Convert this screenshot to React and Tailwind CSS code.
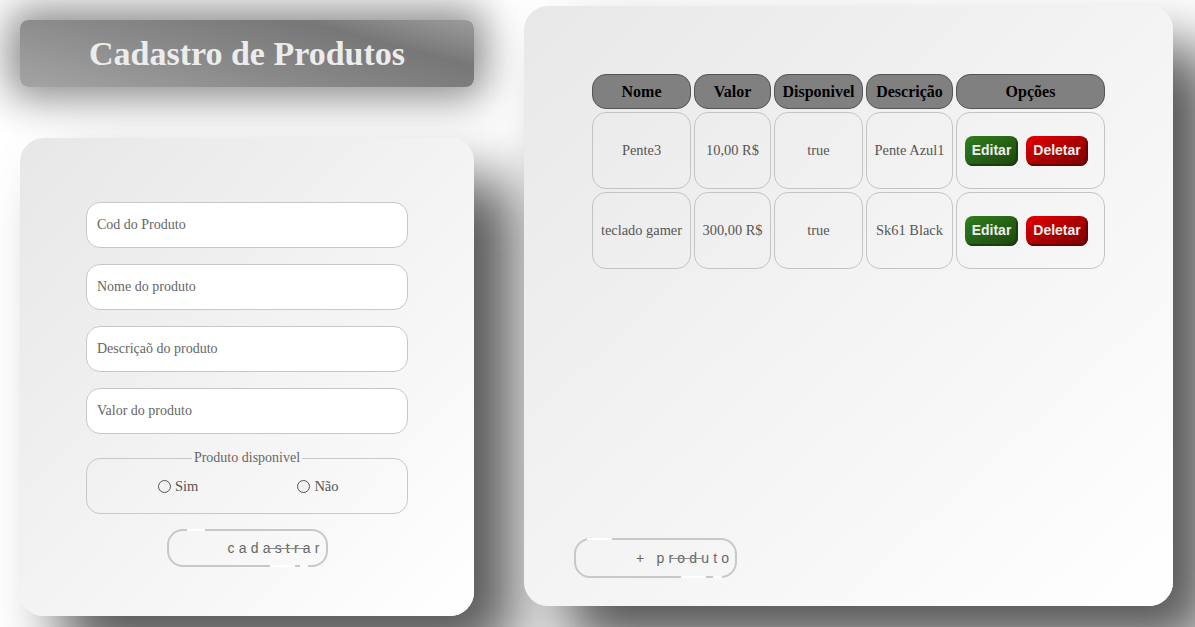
import React from "react";

const serif = { fontFamily: '"Liberation Serif", "Times New Roman", serif' };

const products = [
  { nome: "Pente3", valor: "10,00 R$", disp: "true", desc: "Pente Azul1" },
  { nome: "teclado gamer", valor: "300,00 R$", disp: "true", desc: "Sk61 Black" },
];

function Field({ placeholder }) {
  return (
    <input
      placeholder={placeholder}
      className="w-[322px] h-[46px] rounded-[14px] border border-[#c8c8c8] bg-white pl-[10px] text-[14px] text-[#555] placeholder:text-[#666] outline-none"
      style={serif}
    />
  );
}

function Radio({ label }) {
  return (
    <label className="flex items-center gap-[4px] text-[14.5px] text-[#555]">
      <span className="w-[13px] h-[13px] rounded-full border-[1.5px] border-[#555] bg-[#f2f2f2]" />
      {label}
    </label>
  );
}

// botao com borda "animada" (pedacos brancos sobre a borda)
function GhostButton({ text, w, h, textLeft, tops, bottoms, line }) {
  return (
    <button
      className="relative block rounded-[16px] border-2 border-[#c8c8c8] bg-transparent text-left"
      style={{ width: w, height: h }}
    >
      {tops.map(([l, ww], i) => (
        <span key={"t" + i} className="absolute top-[-2px] h-[2px] bg-white" style={{ left: l, width: ww }} />
      ))}
      {bottoms.map(([l, ww], i) => (
        <span key={"b" + i} className="absolute bottom-[-2px] h-[2px] bg-white" style={{ left: l, width: ww }} />
      ))}
      <span
        className="absolute top-1/2 -translate-y-1/2 text-[14px] tracking-[4.2px] text-[#666]"
        style={{ left: textLeft, fontFamily: '"Liberation Sans", Arial, sans-serif' }}
      >
        {text}
      </span>
      <span className="absolute h-[1px] bg-[#888]" style={{ left: line[0], width: line[1], top: "50%" }} />
    </button>
  );
}

export default function App() {
  return (
    <div className="h-[627px] w-[1195px] overflow-hidden bg-white flex items-start gap-[50px] pl-[20px]" style={serif}>
      {/* coluna esquerda */}
      <div className="flex flex-col pt-[20px] w-[454px]">
        <div className="h-[67px] rounded-[8px] bg-[linear-gradient(195deg,#9c9c9c_0%,#777_25%,#8a8a8a_60%,#a4a4a4_100%)] shadow-[0_0_40px_12px_rgba(0,0,0,0.45)] flex items-center justify-center">
          <h1 className="text-[34px] font-bold text-[#ececec] leading-none">Cadastro de Produtos</h1>
        </div>

        <div className="mt-[51px] h-[478px] rounded-[24px] bg-linear-to-br from-[#e7e7e7] to-white shadow-[40px_40px_60px_#555] flex flex-col items-center pt-[64px]">
          <div className="flex flex-col gap-[16px]">
            <Field placeholder="Cod do Produto" />
            <Field placeholder="Nome do produto" />
            <Field placeholder="Descriçaõ do produto" />
            <Field placeholder="Valor do produto" />
          </div>

          <fieldset className="mt-[17px] w-[322px] h-[63px] rounded-[14px] border border-[#c8c8c8] px-[10px]">
            <legend className="mx-auto px-[2px] text-[14px] leading-[14px] text-[#666]">Produto disponivel</legend>
            <div className="flex pl-[61px] gap-[99px] pt-[11px]">
              <Radio label="Sim" />
              <Radio label="Não" />
            </div>
          </fieldset>

          <div className="mt-[15px] flex">
            <GhostButton
              text="cadastrar"
              w={161}
              h={38}
              textLeft={59}
              tops={[[18, 18]]}
              bottoms={[[101, 25], [131, 8]]}
              line={[96, 40]}
            />
          </div>
        </div>
      </div>

      {/* painel direito */}
      <div className="mt-[6px] w-[649px] h-[600px] rounded-[24px] bg-linear-to-br from-[#e8e8e8] to-white shadow-[40px_40px_60px_#555] flex flex-col items-start">
        <table className="ml-[65px] mt-[65px] border-separate border-spacing-[3px] table-fixed w-[519px]">
          <thead>
            <tr className="text-[16px] font-bold text-black">
              <th className="w-[99px] h-[35px] rounded-[14px] border border-[#555] bg-[#808080] p-0">Nome</th>
              <th className="w-[77px] h-[35px] rounded-[14px] border border-[#555] bg-[#808080] p-0">Valor</th>
              <th className="w-[89px] h-[35px] rounded-[14px] border border-[#555] bg-[#808080] p-0">Disponivel</th>
              <th className="w-[87px] h-[35px] rounded-[14px] border border-[#555] bg-[#808080] p-0">Descrição</th>
              <th className="w-[149px] h-[35px] rounded-[14px] border border-[#555] bg-[#808080] p-0">Opções</th>
            </tr>
          </thead>
          <tbody>
            {products.map((p) => (
              <tr key={p.nome} className="text-[14.4px] text-[#555] text-center">
                <td className="h-[77px] rounded-[14px] border border-[#c4c4c4] p-0">{p.nome}</td>
                <td className="h-[77px] rounded-[14px] border border-[#c4c4c4] p-0">{p.valor}</td>
                <td className="h-[77px] rounded-[14px] border border-[#c4c4c4] p-0">{p.disp}</td>
                <td className="h-[77px] rounded-[14px] border border-[#c4c4c4] p-0">{p.desc}</td>
                <td className="h-[77px] rounded-[14px] border border-[#c4c4c4] p-0">
                  <div className="flex gap-[8px] pl-[8px]" style={{ fontFamily: '"Liberation Sans", Arial, sans-serif' }}>
                    <button className="w-[53px] h-[30px] rounded-[8px] bg-linear-to-br from-[#2f7f1d] to-[#1b470f] shadow-[inset_-2px_-2px_0_#1a3f0d] text-[14px] font-bold text-[#eee]">
                      Editar
                    </button>
                    <button className="w-[62px] h-[30px] rounded-[8px] bg-linear-to-br from-[#e40000] to-[#7a0000] shadow-[inset_-2px_-2px_0_#6a0000] text-[14px] font-bold text-[#eee]">
                      Deletar
                    </button>
                  </div>
                </td>
              </tr>
            ))}
          </tbody>
        </table>

        <div className="mt-auto mb-[28px] ml-[50px] flex">
          <GhostButton
            text="+ produto"
            w={163}
            h={40}
            textLeft={60}
            tops={[[11, 25]]}
            bottoms={[[105, 25], [137, 9]]}
            line={[95, 32]}
          />
        </div>
      </div>
    </div>
  );
}
